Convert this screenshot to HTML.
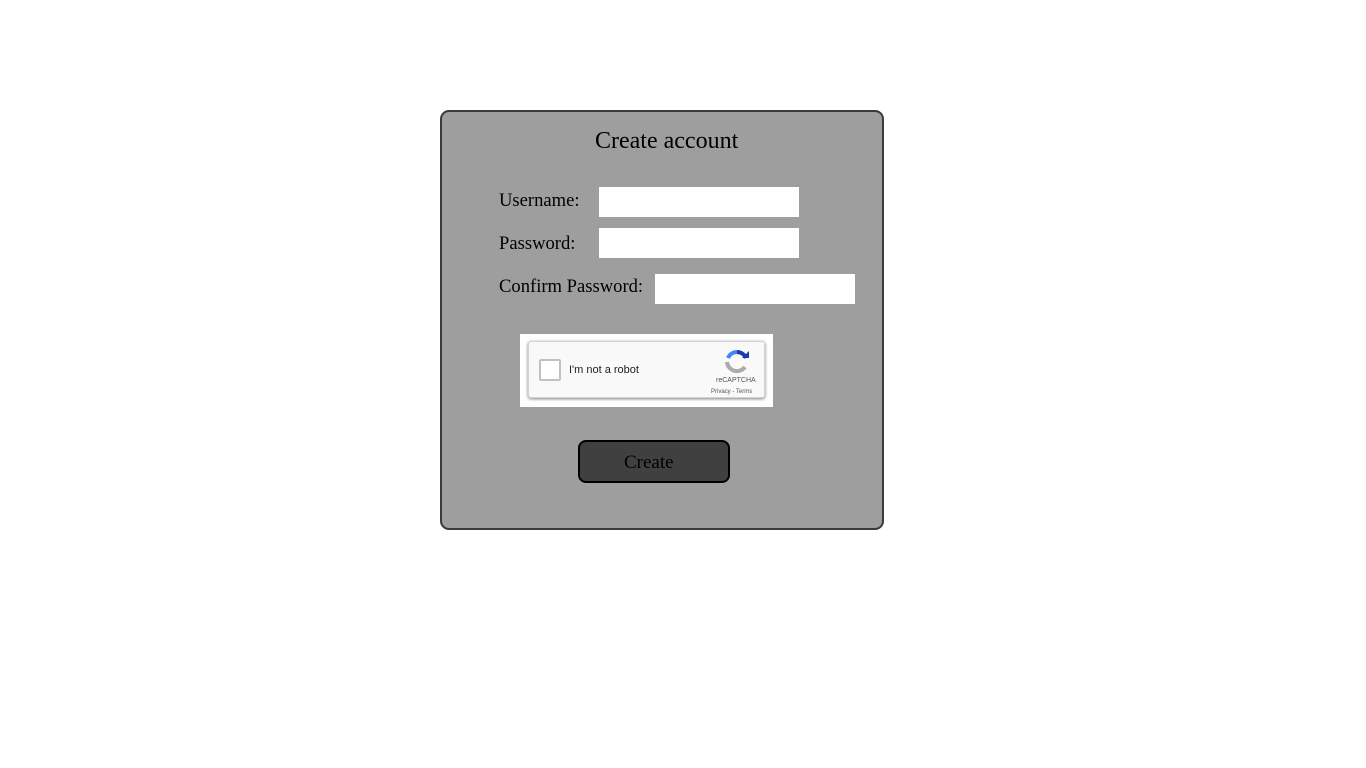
<!DOCTYPE html>
<html><head><meta charset="utf-8"><style>
body{margin:0;background:#fff;width:1366px;height:768px;position:relative;font-family:"Liberation Serif",serif;}
.box{position:absolute;left:440px;top:110px;width:440px;height:416px;background:#9e9e9e;border:2px solid #3a3a3a;border-radius:9px;}
.t{position:absolute;color:#000;}
.in{position:absolute;background:#fff;width:200px;height:30px;}
.cap{position:absolute;left:520px;top:334px;width:253px;height:73px;background:#fff;}
.inner{position:absolute;left:8px;top:7px;width:235px;height:55px;background:#f9f9f9;border:1px solid #d3d3d3;border-radius:3px;box-shadow:0 1px 3px rgba(0,0,0,.5);}
.cb{position:absolute;left:10px;top:17px;width:18px;height:18px;background:#fff;border:2px solid #c1c1c1;border-radius:2px;}
.btn{position:absolute;left:578px;top:440px;width:148px;height:39px;background:#404040;border:2px solid #000;border-radius:8px;font-size:19px;line-height:40px;}
</style></head><body>
<div class="box"></div>
<div class="t" style="left:595px;top:128px;font-size:24px;">Create account</div>
<div class="t" style="left:499px;top:190px;font-size:18.6px;">Username:</div>
<div class="in" style="left:599px;top:187px;"></div>
<div class="t" style="left:499px;top:233px;font-size:18.6px;">Password:</div>
<div class="in" style="left:599px;top:228px;"></div>
<div class="t" style="left:499px;top:276px;font-size:18.6px;">Confirm Password:</div>
<div class="in" style="left:655px;top:274px;"></div>
<div class="cap"><div class="inner">
<div class="cb"></div>
<div style="position:absolute;left:40px;top:22px;font-family:'Liberation Sans',sans-serif;font-size:11px;color:#222;">I'm not a robot</div>
<svg style="position:absolute;left:195px;top:7px" width="26" height="26" viewBox="0 0 26 26">
<path d="M13 3a10 10 0 0 1 9 6" stroke="#1c3aa9" stroke-width="4" fill="none"/>
<path d="M4 9a10 10 0 0 1 9-6" stroke="#4285f4" stroke-width="4" fill="none"/>
<path d="M3 13a10 10 0 0 0 18 5" stroke="#ababab" stroke-width="4" fill="none"/>
<path d="M18 9h7v-7z" fill="#1c3aa9"/>
</svg>
<div style="position:absolute;left:187px;top:35px;font-family:'Liberation Sans',sans-serif;font-size:7px;color:#555;">reCAPTCHA</div>
<div style="position:absolute;left:182px;top:47px;font-family:'Liberation Sans',sans-serif;font-size:6px;color:#555;">Privacy - Terms</div>
</div></div>
<div class="btn"><span style="position:absolute;left:44px;top:1px;">Create</span></div>
</body></html>
